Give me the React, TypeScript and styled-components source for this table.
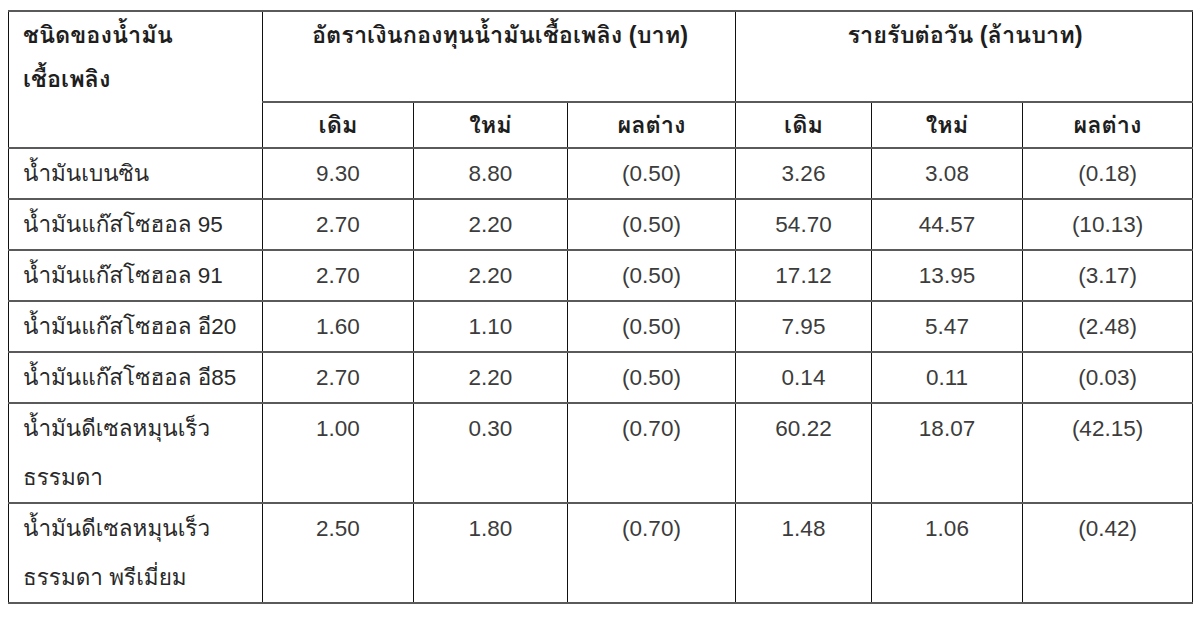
import React from "react";
import styled, { createGlobalStyle } from "styled-components";

const Global = createGlobalStyle`
  html, body { margin: 0; padding: 0; background: #ffffff; }
  body {
    padding: 10px 8px 0 8px;
    font-family: "Liberation Sans", Arial, Tahoma, Loma, Garuda, Waree, "Noto Sans Thai", sans-serif;
  }
`;

const Table = styled.table`
  border-collapse: collapse;
  table-layout: fixed;
  width: 1184px;
  color: #333333;
  font-size: 22.5px;
  border-top: 2px solid #5a5a5a;
  border-bottom: 2px solid #5a5a5a;
  border-left: 1px solid #111111;
  border-right: 1px solid #111111;
`;

const Col = styled.col<{ $w: number }>`
  width: ${(p) => p.$w}px;
`;

const HeadCell = styled.th<{ $align?: "left" | "center"; $tall?: boolean }>`
  font-weight: bold;
  font-size: 23.5px;
  color: #1e1e1e;
  text-align: ${(p) => p.$align ?? "center"};
  vertical-align: ${(p) => (p.$tall ? "top" : "middle")};
  line-height: 44px;
  padding: ${(p) => (p.$tall ? "1px 12px 0 14px" : "0 8px")};
  height: ${(p) => (p.$tall ? "88px" : "42px")};
  border-left: 1px solid #111111;
  border-right: 1px solid #111111;
  border-bottom: 2px solid #5a5a5a;
`;

const Cell = styled.td<{ $first?: boolean }>`
  text-align: ${(p) => (p.$first ? "left" : "center")};
  vertical-align: top;
  line-height: 49px;
  padding: ${(p) => (p.$first ? "0 8px 0 14px" : "0 8px")};
  border-left: 1px solid #111111;
  border-right: 1px solid #111111;
  border-bottom: 2px solid #5a5a5a;
  color: ${(p) => (p.$first ? "#2a2a2a" : "#3c3c3c")};
`;

const Row = styled.tr<{ $h: number }>`
  height: ${(p) => p.$h}px;
`;

type DataRow = { name: string[]; vals: string[] };

const rows: DataRow[] = [
  { name: ["น้ำมันเบนซิน"], vals: ["9.30", "8.80", "(0.50)", "3.26", "3.08", "(0.18)"] },
  { name: ["น้ำมันแก๊สโซฮอล 95"], vals: ["2.70", "2.20", "(0.50)", "54.70", "44.57", "(10.13)"] },
  { name: ["น้ำมันแก๊สโซฮอล 91"], vals: ["2.70", "2.20", "(0.50)", "17.12", "13.95", "(3.17)"] },
  { name: ["น้ำมันแก๊สโซฮอล อี20"], vals: ["1.60", "1.10", "(0.50)", "7.95", "5.47", "(2.48)"] },
  { name: ["น้ำมันแก๊สโซฮอล อี85"], vals: ["2.70", "2.20", "(0.50)", "0.14", "0.11", "(0.03)"] },
  { name: ["น้ำมันดีเซลหมุนเร็ว", "ธรรมดา"], vals: ["1.00", "0.30", "(0.70)", "60.22", "18.07", "(42.15)"] },
  { name: ["น้ำมันดีเซลหมุนเร็ว", "ธรรมดา พรีเมี่ยม"], vals: ["2.50", "1.80", "(0.70)", "1.48", "1.06", "(0.42)"] },
];

const widths = [254, 151, 154, 168, 136, 151, 170];
const sub = ["เดิม", "ใหม่", "ผลต่าง", "เดิม", "ใหม่", "ผลต่าง"];

export default function App() {
  return (
    <>
      <Global />
      <Table>
        <colgroup>
          {widths.map((w, i) => (
            <Col key={i} $w={w} />
          ))}
        </colgroup>
        <thead>
          <tr>
            <HeadCell rowSpan={2} $align="left" $tall>
              ชนิดของน้ำมัน
              <br />
              เชื้อเพลิง
            </HeadCell>
            <HeadCell colSpan={3} $tall>
              อัตราเงินกองทุนน้ำมันเชื้อเพลิง (บาท)
            </HeadCell>
            <HeadCell colSpan={3} $tall>
              รายรับต่อวัน (ล้านบาท)
            </HeadCell>
          </tr>
          <tr>
            {sub.map((s, i) => (
              <HeadCell key={i}>{s}</HeadCell>
            ))}
          </tr>
        </thead>
        <tbody>
          {rows.map((r, i) => (
            <Row key={i} $h={r.name.length === 1 ? 49 : 98}>
              <Cell $first>
                {r.name.map((n, j) => (
                  <React.Fragment key={j}>
                    {j > 0 && <br />}
                    {n}
                  </React.Fragment>
                ))}
              </Cell>
              {r.vals.map((v, j) => (
                <Cell key={j}>{v}</Cell>
              ))}
            </Row>
          ))}
        </tbody>
      </Table>
    </>
  );
}
